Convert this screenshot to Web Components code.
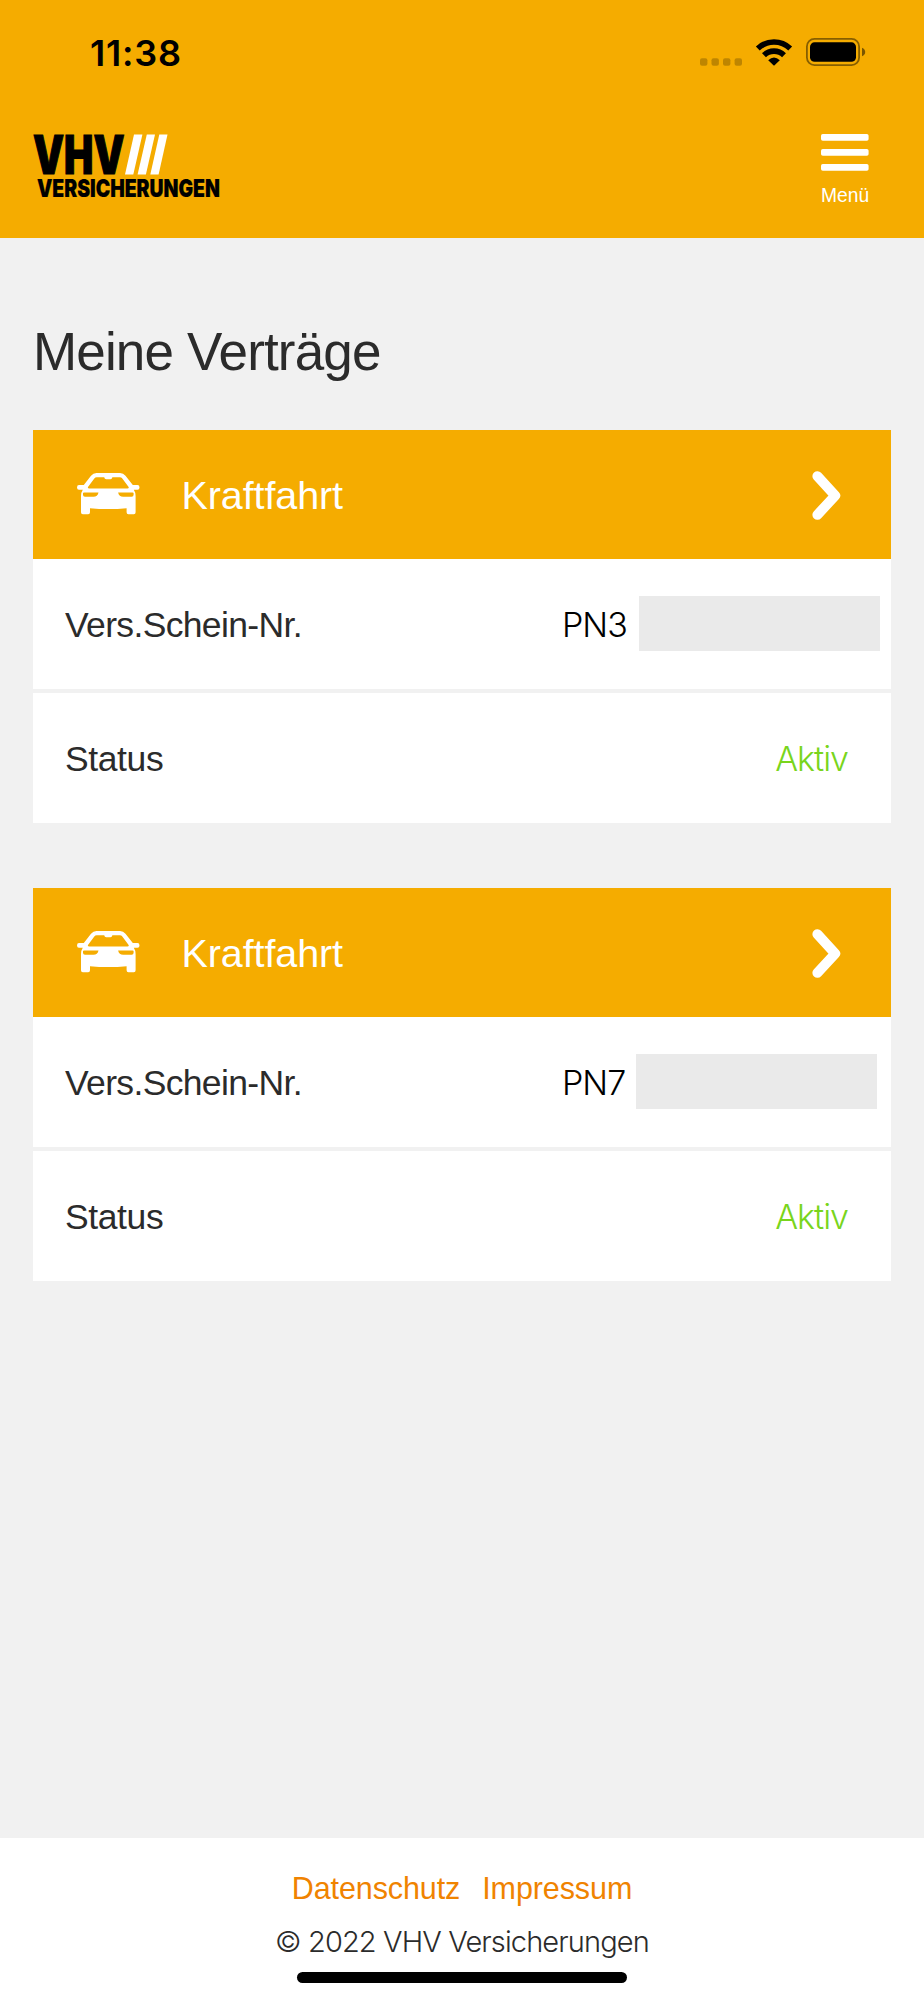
<!DOCTYPE html>
<html lang="de">
<head>
<meta charset="utf-8">
<title>Meine Verträge</title>
<style>
  :root {
    --col-brand: #f5ac00;
    --col-bg: #f1f1f1;
    --col-text: #2b2b2b;
    --col-link: #f08300;
    --col-active: #79d51c;
    --col-redacted: #eaeaea;
    --font-light: "Inter", "Liberation Sans", sans-serif;
  }
  body {
    margin: 0;
    background: var(--col-bg);
    color: var(--col-text);
    font-family: "Liberation Sans", Arial, sans-serif;
  }
</style>
</head>
<body>
<vhv-app>
  <vhv-header slot="header">
    <status-bar slot="status" time="11:38"></status-bar>
    <vhv-logo></vhv-logo>
    <menu-button slot="menu">Menü</menu-button>
  </vhv-header>
  <span slot="title">Meine Verträge</span>
  <contract-card>
    <span slot="title">Kraftfahrt</span>
    <contract-row label="Vers.Schein-Nr." class="number">PN3<redacted-box style="margin-left: 12px"></redacted-box></contract-row>
    <contract-row label="Status" active>Aktiv</contract-row>
  </contract-card>
  <contract-card>
    <span slot="title">Kraftfahrt</span>
    <contract-row label="Vers.Schein-Nr." class="number">PN7<redacted-box style="margin-left: 11px"></redacted-box></contract-row>
    <contract-row label="Status" active>Aktiv</contract-row>
  </contract-card>
  <vhv-footer slot="footer">© 2022 VHV Versicherungen</vhv-footer>
</vhv-app>

<script>
const define = (name, html) =>
  customElements.define(
    name,
    class extends HTMLElement {
      constructor() {
        super();
        this.attachShadow({ mode: "open" });
        this.shadowRoot.innerHTML = html;
      }
    }
  );

define("vhv-app", `
  <style>
    :host {
      display: flex;
      flex-direction: column;
      height: 2000px;
      overflow: hidden;
    }
    main {
      flex: 1;
      padding: 81px 33px 0;
    }
    h1 {
      margin: 0 0 45px;
      height: 66px;
      line-height: 66px;
      font-size: 53px;
      font-weight: 400;
      letter-spacing: -0.85px;
      white-space: nowrap;
    }
    .cards {
      display: grid;
      gap: 65px;
    }
  </style>
  <slot name="header"></slot>
  <main>
    <h1><slot name="title"></slot></h1>
    <div class="cards"><slot></slot></div>
  </main>
  <slot name="footer"></slot>
`);

define("vhv-header", `
  <style>
    :host {
      display: block;
      box-sizing: border-box;
      height: 238px;
      background: var(--col-brand);
    }
    .bar {
      display: flex;
      justify-content: space-between;
      align-items: flex-start;
      padding: 29px 55px 0 33px;
    }
  </style>
  <slot name="status"></slot>
  <div class="bar">
    <slot></slot>
    <slot name="menu"></slot>
  </div>
`);

customElements.define(
  "status-bar",
  class extends HTMLElement {
    constructor() {
      super();
      this.attachShadow({ mode: "open" });
      this.shadowRoot.innerHTML = `
        <style>
          :host {
            display: flex;
            justify-content: space-between;
            align-items: center;
            box-sizing: border-box;
            height: 105px;
            padding: 0 58px 1px 90px;
            color: #000;
          }
          time {
            padding-top: 1px;
            font: 600 36px/40px "Inter", sans-serif;
            letter-spacing: 0.8px;
          }
          svg {
            display: block;
          }
        </style>
        <time></time>
        <svg width="166" height="30" viewBox="700 37 166 30">
          <g opacity="0.22">
            <rect x="700" y="58.3" width="7.4" height="7.4" rx="2" />
            <rect x="711.5" y="58.3" width="7.4" height="7.4" rx="2" />
            <rect x="723" y="58.3" width="7.4" height="7.4" rx="2" />
            <rect x="734.6" y="58.3" width="7.4" height="7.4" rx="2" />
          </g>
          <g fill="none" stroke="#000" stroke-width="5.6">
            <path d="M757.8 48.5A23.5 23.5 0 0 1 790.2 48.5" />
            <path d="M764 55.2A14.4 14.4 0 0 1 784 55.2" />
          </g>
          <path d="M774 65.8L768.2 60.2Q774 54.8 779.8 60.2Z" />
          <rect x="806.9" y="38.9" width="52.2" height="26.2" rx="7.6" fill="none" stroke="#000" stroke-width="1.8" opacity="0.45" />
          <rect x="810" y="42.3" width="46" height="19.5" rx="4.6" />
          <path d="M862 47.7Q865.2 49 865.2 52T862 56.3Z" opacity="0.5" />
        </svg>
      `;
      this.shadowRoot.querySelector("time").textContent = this.getAttribute("time");
    }
  }
);

define("vhv-logo", `
  <style>
    :host, svg {
      display: block;
    }
    svg {
      overflow: visible;
    }
    text {
      font-family: "Inter", sans-serif;
      font-weight: 900;
      stroke: #000;
    }
  </style>
  <svg width="188" height="66" viewBox="33 134 188 66">
    <text x="33" y="173.8" font-size="53.2" textLength="91.5" lengthAdjust="spacingAndGlyphs" stroke-width="1.2">VHV</text>
    <g fill="#fff">
      <path d="M134 134.5H142.4L133.3 174.5H125Z" />
      <path d="M146.8 134.5H155L145.9 174.5H137.6Z" />
      <path d="M159.3 134.5H167.5L158.6 174.5H150.3Z" />
    </g>
    <text x="36.9" y="196.7" font-size="24" textLength="183" lengthAdjust="spacingAndGlyphs" stroke-width="0.2">VERSICHERUNGEN</text>
  </svg>
`);

define("menu-button", `
  <style>
    :host {
      display: flex;
      flex-direction: column;
      align-items: center;
      width: 48px;
      color: #fff;
      font-size: 19.3px;
      line-height: 24px;
      white-space: nowrap;
    }
    svg {
      display: block;
      margin-bottom: 12px;
    }
  </style>
  <svg width="48" height="38" viewBox="0 0 48 38" fill="#fff">
    <rect y="0" width="47.6" height="6.8" rx="1.8" />
    <rect y="15" width="47.6" height="6.8" rx="1.8" />
    <rect y="30" width="47.6" height="6.8" rx="1.8" />
  </svg>
  <slot></slot>
`);

define("contract-card", `
  <style>
    :host {
      display: grid;
      gap: 4px;
    }
    header {
      display: flex;
      align-items: center;
      height: 129px;
      margin-bottom: -4px;
      padding: 0 50px 0 44px;
      background: var(--col-brand);
      color: #fff;
      font-size: 39.5px;
      letter-spacing: -0.1px;
    }
    .car {
      margin-bottom: 1px;
    }
    .title {
      flex: 1;
      margin-left: 41.5px;
      padding-top: 2px;
    }
  </style>
  <header>
    <svg class="car" width="63" height="42" viewBox="0 0 63 42" fill="#fff">
      <path fill-rule="evenodd" d="M14 2.8Q16.2 0 19.5 0H43Q46.3 0 48.5 2.8L55.8 12H60.5Q62.5 12 62.5 14.4T60.5 16.8H56.8Q58.6 19.5 58.6 23V39.3Q58.6 41.2 56.8 41.2H51.4Q49.6 41.2 49.6 39.3V35.2Q31.3 37 13 35.2V39.3Q13 41.2 11.2 41.2H5.8Q4 41.2 4 39.3V23Q4 19.5 5.8 16.8H2Q0 16.8 0 14.4T2 12H6.8Z
        M17.3 5.6L10.8 14.2Q11 15.4 12.2 15.4H50.4Q51.8 15.4 51.8 14.2L45.3 5.6Q44.4 4.3 42.8 4.3H35.4Q35 6.2 33.4 6.2H29.2Q27.6 6.2 27.2 4.3H19.8Q18.2 4.3 17.3 5.6Z
        M6 20.2Q6 19.4 7 19.4H21.5Q20.5 23.7 16.5 23.7H8Q6 23.7 6 21.8Z
        M56.6 20.2Q56.6 19.4 55.6 19.4H41.1Q42.1 23.7 46.1 23.7H54.6Q56.6 23.7 56.6 21.8Z" />
    </svg>
    <span class="title"><slot name="title"></slot></span>
    <svg width="29" height="50" viewBox="0 0 29 50">
      <path d="M5.4 6.2L23.2 25.6L5.4 44.8" fill="none" stroke="#fff" stroke-width="10" stroke-linecap="round" stroke-linejoin="round" />
    </svg>
  </header>
  <slot></slot>
`);

customElements.define(
  "contract-row",
  class extends HTMLElement {
    constructor() {
      super();
      this.attachShadow({ mode: "open" });
      this.shadowRoot.innerHTML = `
        <style>
          :host {
            display: flex;
            align-items: center;
            box-sizing: border-box;
            height: 130px;
            padding: 0 43px 0 32px;
            background: #fff;
            font-size: 35.5px;
            white-space: nowrap;
          }
          :host(.number) {
            padding-right: 0;
          }
          .label {
            flex: 1;
            padding-top: 2px;
            letter-spacing: -0.4px;
          }
          :host(.number) .label {
            letter-spacing: -0.65px;
          }
          .value {
            display: flex;
            align-items: center;
            font-family: var(--font-light);
            font-weight: 300;
            font-size: 34px;
            letter-spacing: -1px;
            color: #000;
          }
          :host(.number) .value {
            width: 329px;
          }
          :host([active]) .value {
            color: var(--col-active);
          }
        </style>
        <span class="label"></span>
        <span class="value"><slot></slot></span>
      `;
      this.shadowRoot.querySelector(".label").textContent = this.getAttribute("label");
    }
  }
);

define("redacted-box", `
  <style>
    :host {
      display: block;
      width: 241px;
      height: 55px;
      margin-bottom: 1px;
      background: var(--col-redacted);
    }
  </style>
`);

define("vhv-footer", `
  <style>
    :host {
      display: flex;
      flex-direction: column;
      align-items: center;
      box-sizing: border-box;
      height: 162px;
      padding-top: 31px;
      background: #fff;
      white-space: nowrap;
    }
    nav {
      display: flex;
      gap: 22px;
      height: 38px;
      line-height: 38px;
      font-size: 30.5px;
      letter-spacing: -0.1px;
    }
    a {
      color: var(--col-link);
      text-decoration: none;
    }
    .copy {
      height: 38px;
      margin-top: 16px;
      font: 300 29px/38px var(--font-light);
      letter-spacing: -0.88px;
    }
    .home {
      width: 330px;
      height: 11px;
      margin-top: 11px;
      border-radius: 6px;
      background: #000;
    }
  </style>
  <nav>
    <a href="#datenschutz">Datenschutz</a>
    <a href="#impressum">Impressum</a>
  </nav>
  <div class="copy"><slot></slot></div>
  <div class="home"></div>
`);
</script>
</body>
</html>
